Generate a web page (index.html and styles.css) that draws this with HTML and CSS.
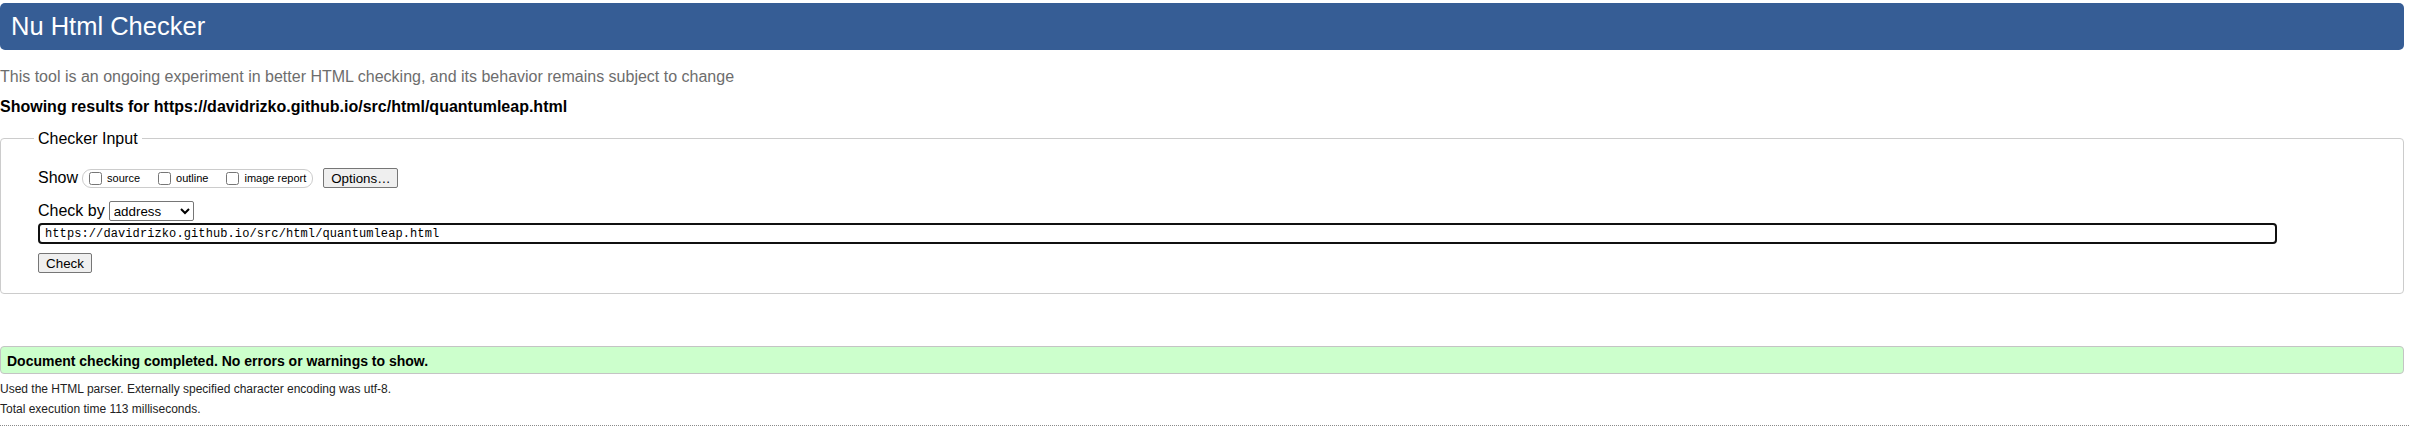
FILE: index.html
```html
<!DOCTYPE html>
<html lang="en">
<head>
<meta charset="utf-8">
<title>Nu Html Checker</title>
<link rel="stylesheet" href="styles.css">
</head>
<body>
<div class="page">
  <h1 class="title">Nu Html Checker</h1>
  <p class="intro">This tool is an ongoing experiment in better HTML checking, and its behavior remains subject to change</p>
  <p class="showing">Showing results for https://davidrizko.github.io/src/html/quantumleap.html</p>
  <form class="checker">
    <fieldset class="input-box">
      <legend class="legend">Checker Input</legend>
      <div class="row show-row">
        <span class="label">Show</span>
        <span class="extras">
          <label class="opt"><input type="checkbox" class="cb"><span class="opt-text">source</span></label>
          <label class="opt"><input type="checkbox" class="cb"><span class="opt-text">outline</span></label>
          <label class="opt"><input type="checkbox" class="cb"><span class="opt-text">image report</span></label>
        </span>
        <button type="button" class="btn options">Options…</button>
      </div>
      <div class="row by-row">
        <span class="label">Check by</span>
        <select class="sel"><option>address</option></select>
      </div>
      <input class="url" type="url" value="https://davidrizko.github.io/src/html/quantumleap.html">
      <div class="row submit-row">
        <button type="button" class="btn">Check</button>
      </div>
    </fieldset>
  </form>
  <p class="success">Document checking completed. No errors or warnings to show.</p>
  <p class="meta meta-first">Used the HTML parser. Externally specified character encoding was utf-8.</p>
  <p class="meta">Total execution time 113 milliseconds.</p>
  <hr class="footer-rule">
</div>
</body>
</html>
```

FILE: styles.css
```css
html, body {
  margin: 0;
  padding: 0;
  background: #ffffff;
}

body {
  font-family: "Liberation Sans", Arial, sans-serif;
  color: #000;
  overflow: hidden;
}

.page {
  width: 2404px;
}

.title {
  margin: 3px 0 0;
  height: 47px;
  line-height: 47px;
  padding-left: 11px;
  font-size: 25.5px;
  font-weight: normal;
  color: #ffffff;
  background: #365d95;
  border-radius: 5px;
}

.intro {
  margin: 17px 0 0;
  font-size: 16px;
  line-height: 20px;
  color: #6d6d6d;
}

.showing {
  margin: 10px 0 0;
  font-size: 16px;
  font-weight: bold;
  line-height: 20px;
}

.checker {
  margin: 12px 0 0;
}

.input-box {
  margin: 0;
  min-width: 0;
  border: 1px solid #cccccc;
  border-radius: 4px;
  padding: 20px 0 20px 37px;
}

.legend {
  margin-left: -4px;
  padding: 0 4px;
  font-size: 16px;
  line-height: 19px;
}

.row {
  display: flex;
  align-items: center;
  height: 20px;
}

.label {
  font-size: 16px;
  line-height: 20px;
}

.show-row .label {
  margin-right: 4px;
}

.extras {
  display: inline-flex;
  align-items: center;
  gap: 18px;
  box-sizing: border-box;
  height: 19px;
  padding: 0 6px;
  border: 1px solid #cccccc;
  border-radius: 9px;
}

.opt {
  display: inline-flex;
  align-items: center;
}

.cb {
  margin: 0;
  width: 13px;
  height: 13px;
}

.opt-text {
  margin-left: 5px;
  font-size: 11px;
  line-height: 13px;
}

.btn {
  box-sizing: border-box;
  height: 20px;
  padding: 0 7px;
  font-family: "Liberation Sans", Arial, sans-serif;
  font-size: 13.33px;
  color: #000;
  background: #efefef;
  border: 1px solid #767676;
  border-radius: 2px;
}

.options {
  margin-left: 10px;
  width: 75px;
}

.by-row {
  margin-top: 13px;
}

.by-row .label {
  margin-right: 4px;
}

.sel {
  box-sizing: border-box;
  width: 85px;
  height: 20px;
  font-family: "Liberation Sans", Arial, sans-serif;
  font-size: 13.33px;
  color: #000;
  background: #fff;
  border: 1px solid #767676;
  border-radius: 2px;
}

.url {
  display: block;
  box-sizing: border-box;
  margin-top: 2px;
  width: 2239px;
  height: 21px;
  padding: 0 5px;
  border: 2px solid #101010;
  border-radius: 4px;
  font-family: "Liberation Mono", "DejaVu Sans Mono", monospace;
  font-size: 12px;
  letter-spacing: 0.1px;
  color: #000;
  outline: none;
}

.submit-row {
  margin-top: 9px;
}

.submit-row .btn {
  width: 54px;
}

.success {
  margin: 52px 0 0;
  height: 28px;
  box-sizing: border-box;
  padding: 2px 0 0 6px;
  border: 1px solid #c4c4c4;
  border-radius: 4px;
  background: #ccffcc;
  font-size: 14px;
  font-weight: bold;
  line-height: 24px;
}

.meta {
  margin: 0;
  font-size: 12px;
  line-height: 20px;
  color: #222;
}

.meta-first {
  margin-top: 5px;
}

.footer-rule {
  margin: 6px -5px 0 0;
  height: 0;
  border: 0;
  border-top: 1px dotted #8a8a8a;
}
```
